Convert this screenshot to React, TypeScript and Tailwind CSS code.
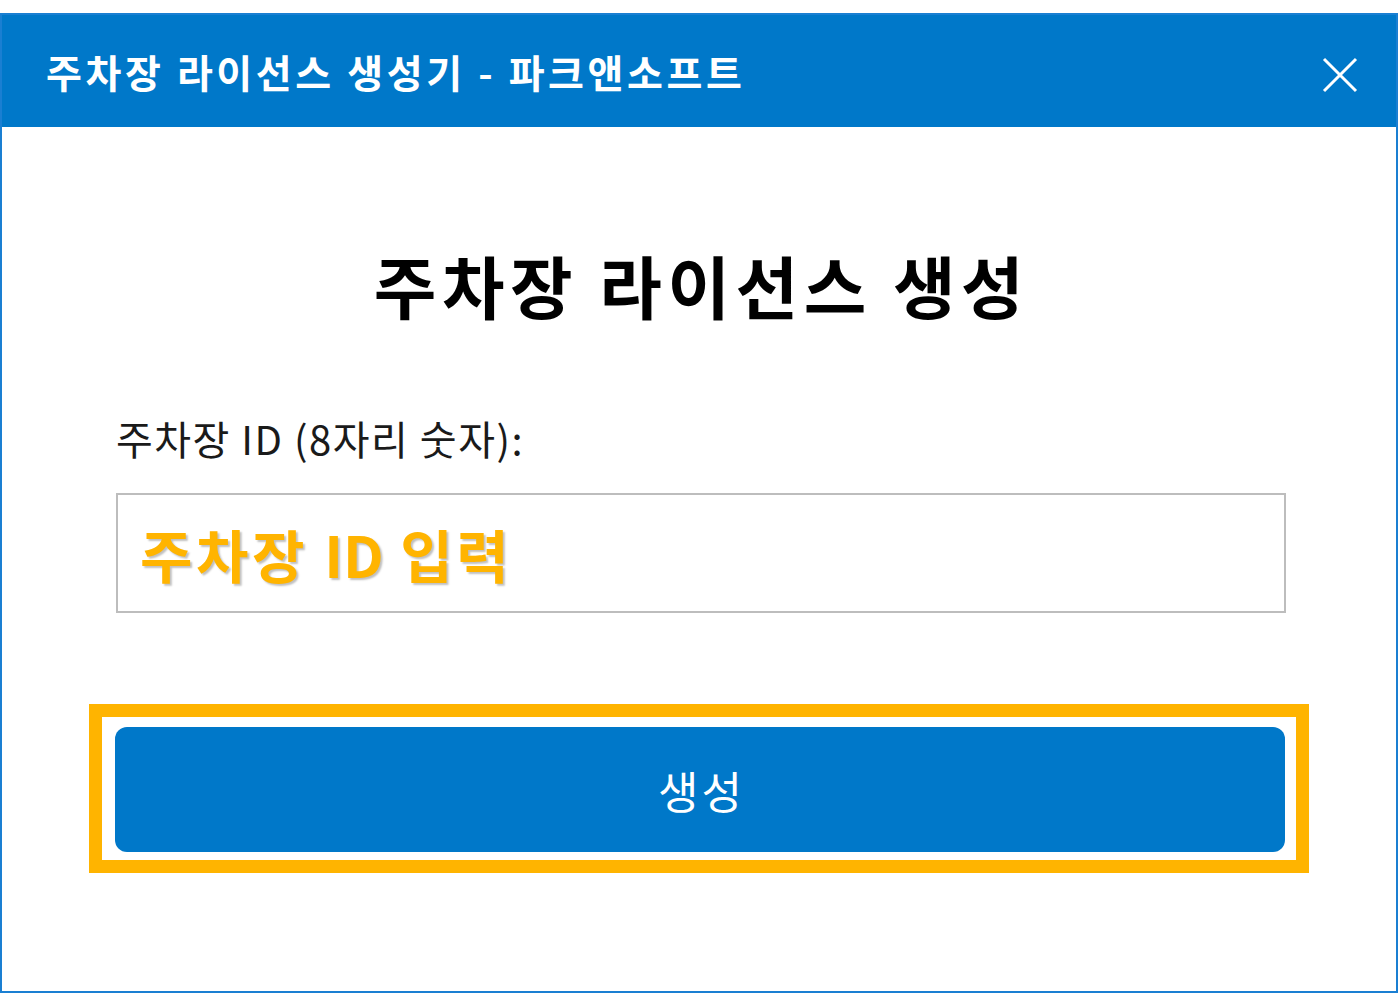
import React from 'react';

const App = () => {
  const font = { fontFamily: '"Noto Sans CJK KR", "Noto Sans", sans-serif' };

  return (
    <div className="w-[1400px] h-[1000px] bg-white pt-[13px]" style={font}>
      <div className="w-[1398px] h-[980px] border-2 border-[#1a7fd2] flex flex-col bg-white">
        {/* title bar */}
        <div className="h-[112px] bg-[#0078c9] flex items-center justify-between pl-[44px] pr-[38px]">
          <div className="text-white text-[39px] font-bold leading-none tracking-[3.6px]">
            주차장 라이선스 생성기 - 파크앤소프트
          </div>
          <svg width="36" height="36" viewBox="0 0 36 36" className="mt-[8px]">
            <path d="M2 2 L34 34 M34 2 L2 34" stroke="white" strokeWidth="3" fill="none" />
          </svg>
        </div>

        {/* body */}
        <div className="flex flex-col pt-[124px]">
          <h1 className="text-center text-[68px] font-bold leading-[68px] text-black tracking-[5.6px] pl-[5px]">
            주차장 라이선스 생성
          </h1>

          <label className="mt-[99px] ml-[114px] text-[40px] leading-[40px] text-[#1a1a1a] tracking-[1.5px]">
            주차장 ID (8자리 숫자):
          </label>

          <div className="mt-[35px] ml-[114px] w-[1170px] h-[120px] border-2 border-[#bdbdbd] flex items-center pl-[22px]">
            <span
              className="text-[57px] font-bold leading-none text-[#ffb400] tracking-[3.5px]"
              style={{ textShadow: '2px 2px 2px rgba(0,0,0,0.25)' }}
            >
              주차장 <span className="tracking-[0px]">ID</span> 입력
            </span>
          </div>

          <div className="mt-[91px] ml-[87px] w-[1220px] h-[169px] border-[13px] border-[#ffb400] pt-[10px] pl-[13px]">
            <button className="w-[1170px] h-[125px] rounded-[12px] bg-[#0078c9] text-white text-[44px] leading-none tracking-[3px] pl-[3px]">
              생성
            </button>
          </div>
        </div>
      </div>
    </div>
  );
};

export default App;
